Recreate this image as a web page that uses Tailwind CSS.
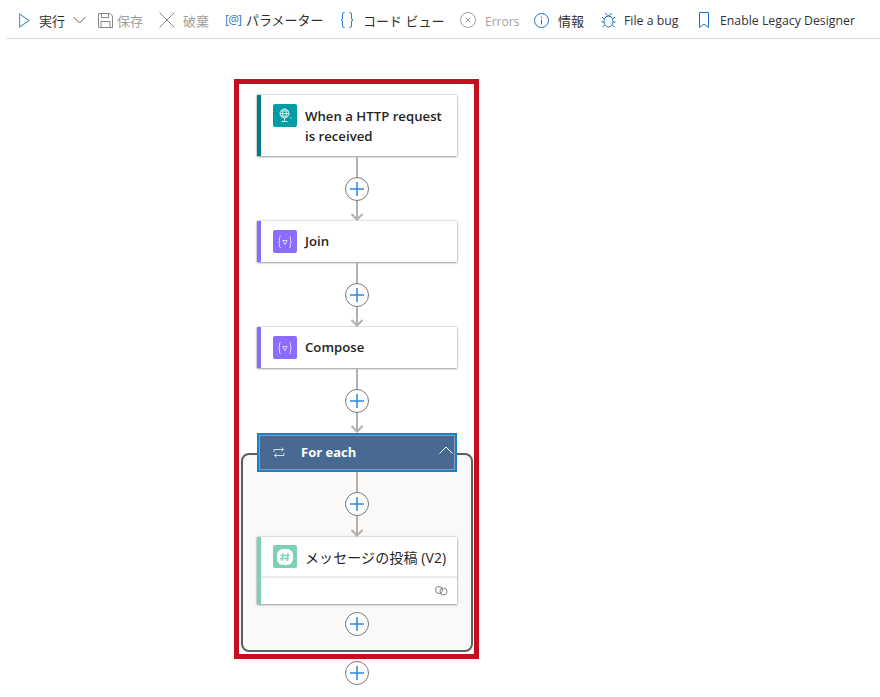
<!DOCTYPE html>
<html lang="en">
<head>
  <meta charset="UTF-8">
  <title>Logic App Designer</title>
  <script src="https://cdn.jsdelivr.net/npm/@tailwindcss/browser@4"></script>
</head>
<body class="bg-white w-[880px] h-[697px] overflow-hidden font-['Open_Sans','Noto_Sans_CJK_JP',sans-serif] text-[#323130]">

  <!-- Toolbar -->
  <div class="ml-[7px] h-[39px] border-b border-[#d6d6d6] flex items-center text-[13px] pt-[5px]">
    <svg class="ml-[12px] w-[11px] h-[15px] -mt-[3px]" viewBox="0 0 11 15" fill="none" stroke="#5c8fd6" stroke-width="1.100"><path d="M.6 1v13l9.500-6.500z"/></svg>
    <span class="ml-[9px] w-[26px]">実行</span>
    <svg class="ml-[8px] w-[13px] h-[8px] -mt-[3px]" viewBox="0 0 13 8" fill="none" stroke="#605e5c"><path d="M.5 1l6 6 6-6"/></svg>
    <svg class="ml-[12px] w-[15px] h-[15px] -mt-[3px]" viewBox="0 0 15 15" fill="none" stroke="#8a8886"><path d="M.5.5h11.500l2.500 2.500v11.500H.5zM3.500.5v4h7v-4M3 14.500v-6h9v6"/></svg>
    <span class="ml-[4px] w-[26px] text-[#a19f9d]">保存</span>
    <svg class="ml-[16px] w-[16px] h-[16px] -mt-[3px]" viewBox="0 0 16 16" fill="none" stroke="#8a8886"><path d="M.5.5l15 15M15.500.5l-15 15"/></svg>
    <span class="ml-[8px] w-[26px] text-[#a19f9d]">破棄</span>
    <span class="ml-[16px] w-[16px] text-[12px] text-[#2b79c9] whitespace-nowrap tracking-[-0.8px] -mt-[3px]">[@]</span>
    <span class="ml-[5px] w-[78px] whitespace-nowrap -mt-[1px]">パラメーター</span>
    <svg class="ml-[16px] w-[14px] h-[16px] -mt-[3px]" viewBox="0 0 14 16" fill="none" stroke="#2b79c9"><path d="M4.500.5H4Q2.500.5 2.500 2v4Q2.500 8 1 8q1.500 0 1.500 2v4q0 1.500 1.500 1.500h.5M9.500.5h.5q1.500 0 1.500 1.500v4q0 2 1.500 2-1.500 0-1.500 2v4q0 1.500-1.500 1.500h-.5"/></svg>
    <span class="ml-[9px] w-[81px] whitespace-nowrap">コード ビュー</span>
    <svg class="ml-[16px] w-[16px] h-[16px] -mt-[3px]" viewBox="0 0 16 16" fill="none" stroke="#a19f9d"><circle cx="8" cy="8" r="7.500"/><path d="M5.500 5.500l5 5M10.500 5.500l-5 5"/></svg>
    <span class="ml-[9px] w-[33px] text-[12px] text-[#a19f9d] whitespace-nowrap">Errors</span>
    <svg class="ml-[16px] w-[15px] h-[15px] -mt-[3px]" viewBox="0 0 15 15" fill="none" stroke="#1a73c9"><circle cx="7.500" cy="7.500" r="7"/><path d="M7.500 6.500v5M7.500 3.500v1.500"/></svg>
    <span class="ml-[9px] w-[26px]">情報</span>
    <svg class="ml-[17px] w-[15px] h-[16px] -mt-[3px]" viewBox="0 0 15 16" fill="none" stroke="#1a73c9"><ellipse cx="7.500" cy="9.500" rx="4.500" ry="5.500"/><path d="M4.500 5q3-3 6 0M4.500 1l1.500 2M10.500 1L9 3M3 7L1 5M12 7l2-2M3 10H.5M12 10h2.500M3.500 13L1.500 15M11.500 13l2 2"/></svg>
    <span class="ml-[8px] w-[55px] text-[12.3px] whitespace-nowrap">File a bug</span>
    <svg class="ml-[20px] w-[10px] h-[16px] -mt-[3px]" viewBox="0 0 10 16" fill="none" stroke="#1a73c9"><path d="M.5.5h9v15L5 12 .5 15.500z"/></svg>
    <span class="ml-[11px] text-[12.3px] whitespace-nowrap">Enable Legacy Designer</span>
  </div>

  <!-- Flow, highlighted with the red frame -->
  <div class="mt-[40px] ml-[234px] w-[245px] border-[5px] border-[#c50f1f] pt-[11px] pb-[2px] pl-[18px]">
    <div class="w-[200px] flex flex-col items-center">

      <div class="w-full h-[61px] bg-white border-l-4 border-[#007c89] shadow-[0_0_2px_rgba(0,0,0,0.3),0_1px_2px_rgba(0,0,0,0.3)] flex pl-[12px] pt-[9px]">
        <div class="w-[24px] h-[23px] rounded-[2px] bg-[#009da5] flex items-center justify-center shrink-0">
          <svg class="w-[15px] h-[15px]" viewBox="0 0 15 15" fill="none" stroke="#e6f6f6" stroke-width="0.9"><circle cx="6.500" cy="5.500" r="4.500"/><ellipse cx="6.500" cy="5.500" rx="2" ry="4.500"/><path d="M2 5.500h9M2.800 3h7.400M2.800 8h7.400M6.500 10v3M3.500 13.500h6M12 9.500l1.500 1"/></svg>
        </div>
        <div class="ml-[8px] text-[13.2px] leading-[20px] font-semibold text-[#252423] whitespace-nowrap pt-[2px]">When a HTTP request<br>is received</div>
      </div>

      <svg class="w-[24px] h-[65px] shrink-0" viewBox="0 0 24 65" fill="none"><path d="M12 0v64" stroke="#b3b0ad" stroke-width="2"/><path d="M6.500 58l5.500 5.500L17.500 58" stroke="#b3b0ad" stroke-width="2"/><circle cx="12" cy="33" r="11.500" fill="#fff" stroke="#797775"/><path d="M5 33h14M12 26v14" stroke="#2b88d8" stroke-width="1.500"/></svg>

      <div class="w-full h-[41px] bg-white border-l-4 border-[#8c6cff] shadow-[0_0_2px_rgba(0,0,0,0.3),0_1px_2px_rgba(0,0,0,0.3)] flex items-center pl-[12px]">
        <div class="w-[24px] h-[23px] rounded-[2px] bg-[#8c6cff] flex items-center justify-center">
          <svg class="w-[14px] h-[12px]" viewBox="0 0 14 12" fill="none" stroke="#fff" stroke-opacity="0.75" stroke-width="0.9"><path d="M3 .5H2.500Q1.500.5 1.500 1.500v3Q1.500 6 .5 6q1 0 1 1.500v3q0 1 1 1H3M11 .5h.5q1 0 1 1v3q0 1.500 1 1.500-1 0-1 1.500v3q0 1-1 1H11M4.800 4.500h4.400L7 8.500z"/></svg>
        </div>
        <div class="ml-[8px] pt-[1px] text-[13.2px] font-semibold text-[#252423]">Join</div>
      </div>

      <svg class="w-[24px] h-[65px] shrink-0" viewBox="0 0 24 65" fill="none"><path d="M12 0v64" stroke="#b3b0ad" stroke-width="2"/><path d="M6.500 58l5.500 5.500L17.500 58" stroke="#b3b0ad" stroke-width="2"/><circle cx="12" cy="33" r="11.500" fill="#fff" stroke="#797775"/><path d="M5 33h14M12 26v14" stroke="#2b88d8" stroke-width="1.500"/></svg>

      <div class="w-full h-[41px] bg-white border-l-4 border-[#8c6cff] shadow-[0_0_2px_rgba(0,0,0,0.3),0_1px_2px_rgba(0,0,0,0.3)] flex items-center pl-[12px]">
        <div class="w-[24px] h-[23px] rounded-[2px] bg-[#8c6cff] flex items-center justify-center">
          <svg class="w-[14px] h-[12px]" viewBox="0 0 14 12" fill="none" stroke="#fff" stroke-opacity="0.75" stroke-width="0.9"><path d="M3 .5H2.500Q1.500.5 1.500 1.500v3Q1.500 6 .5 6q1 0 1 1.500v3q0 1 1 1H3M11 .5h.5q1 0 1 1v3q0 1.500 1 1.500-1 0-1 1.500v3q0 1-1 1H11M4.800 4.500h4.400L7 8.500z"/></svg>
        </div>
        <div class="ml-[8px] pt-[1px] text-[13.2px] font-semibold text-[#252423]">Compose</div>
      </div>

      <svg class="w-[24px] h-[65px] shrink-0" viewBox="0 0 24 65" fill="none"><path d="M12 0v64" stroke="#b3b0ad" stroke-width="2"/><path d="M6.500 58l5.500 5.500L17.500 58" stroke="#b3b0ad" stroke-width="2"/><circle cx="12" cy="33" r="11.500" fill="#fff" stroke="#797775"/><path d="M5 33h14M12 26v14" stroke="#2b88d8" stroke-width="1.500"/></svg>

      <!-- For each -->
      <div class="relative z-10 w-full h-[39px] bg-[#486991] border-2 border-[#1a7fc8] shadow-[inset_0_0_0_1px_rgba(255,255,255,0.35)] flex items-center pl-[14px] shrink-0">
        <svg class="w-[12px] h-[11px]" viewBox="0 0 12 11" fill="none" stroke="#d5dfea"><path d="M1 5V2.500h9.500M8.500.5l2 2-2 2M11 6v2.500H1.500M3.500 6.500l-2 2 2 2"/></svg>
        <div class="ml-[16px] pt-[1px] text-[13px] font-bold text-white">For each</div>
        <svg class="absolute right-[2px] top-[11px] w-[14px] h-[8px]" viewBox="0 0 14 8" fill="none" stroke="#fff"><path d="M.5 7.500L7 1l6.500 6.500"/></svg>
      </div>
      <div class="-mt-[19px] w-[232px] shrink-0 bg-[#faf9f8] border-2 border-[#605e5c] rounded-lg pt-[17px] pb-[14px] flex flex-col items-center">
        <svg class="w-[24px] h-[65px] shrink-0" viewBox="0 0 24 65" fill="none"><path d="M12 0v64" stroke="#b3b0ad" stroke-width="2"/><path d="M6.500 58l5.500 5.500L17.500 58" stroke="#b3b0ad" stroke-width="2"/><circle cx="12" cy="32" r="11.500" fill="#fff" stroke="#797775"/><path d="M5 32h14M12 25v14" stroke="#2b88d8" stroke-width="1.500"/></svg>

        <div class="w-[200px] h-[67px] bg-white border-l-4 border-[#7bd3b4] shadow-[0_0_2px_rgba(0,0,0,0.3),0_1px_2px_rgba(0,0,0,0.3)] flex flex-col">
          <div class="h-[41px] flex items-center pl-[12px] border-b-2 border-[#edebe9] shrink-0">
            <div class="w-[24px] h-[23px] rounded-[2px] bg-[#7bd3b4] flex items-center justify-center">
              <svg class="w-[16px] h-[16px]" viewBox="0 0 16 16"><rect width="16" height="16" rx="6" fill="#fff"/><path d="M6 4L5 12M11 4l-1 8M3.500 6.500h9M3 9.500h9" stroke="#7bd3b4" stroke-width="1.300"/></svg>
            </div>
            <div class="ml-[8px] pt-[1px] text-[14px] text-[#252423] whitespace-nowrap tracking-[0.1px]">メッセージの投稿 (V2)</div>
          </div>
          <div class="flex-1 flex items-center justify-end pr-[9px]">
            <svg class="w-[13px] h-[10px]" viewBox="0 0 13 10" fill="none" stroke="#797775" stroke-width="0.9"><circle cx="4" cy="4" r="3.500"/><circle cx="8.500" cy="5.500" r="3.500"/></svg>
          </div>
        </div>

        <svg class="mt-[8px] w-[24px] h-[24px] shrink-0" viewBox="0 0 24 24" fill="none"><circle cx="12" cy="12" r="11.500" fill="#fff" stroke="#797775"/><path d="M5 12h14M12 5v14" stroke="#2b88d8" stroke-width="1.500"/></svg>
      </div>
    </div>
  </div>

  <svg class="mt-[2px] ml-[345px] w-[24px] h-[24px]" viewBox="0 0 24 24" fill="none"><circle cx="12" cy="12" r="11.500" fill="#fff" stroke="#797775"/><path d="M5 12h14M12 5v14" stroke="#2b88d8" stroke-width="1.500"/></svg>

</body>
</html>
